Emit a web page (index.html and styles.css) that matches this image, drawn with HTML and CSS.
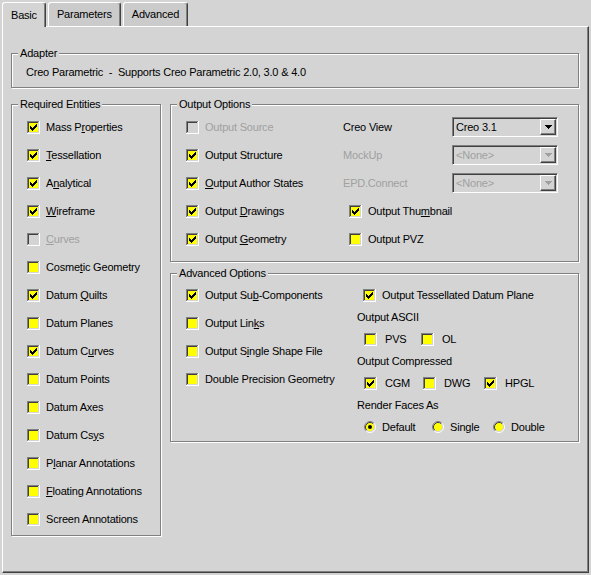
FILE: index.html
```html
<!DOCTYPE html>
<html>
<head>
<meta charset="utf-8">
<link rel="stylesheet" href="styles.css">
</head>
<body>
<svg class="defs" width="0" height="0">
  <defs>
    <symbol id="box" viewBox="0 0 13 13">
      <rect x="0" y="0" width="13" height="13" fill="#fff"/>
      <path d="M0 0h12v1H1v11H0z" fill="#808080"/>
      <path d="M1 1h10v1H2v9H1z" fill="#404040"/>
      <path d="M1 11h11v1H1zM11 1h1v11h-1z" fill="#d4d4d4"/>
    </symbol>
    <symbol id="cbOff" viewBox="0 0 13 13">
      <use href="#box"/>
      <rect x="2" y="2" width="9" height="9" fill="#ffff00"/>
    </symbol>
    <symbol id="cbOn" viewBox="0 0 13 13">
      <use href="#box"/>
      <rect x="2" y="2" width="9" height="9" fill="#ffff00"/>
      <path d="M3 5h1v3H3zM4 6h1v3H4zM5 7h1v3H5zM6 6h1v3H6zM7 5h1v3H7zM8 4h1v3H8zM9 3h1v3H9z" fill="#000"/>
    </symbol>
    <symbol id="cbDis" viewBox="0 0 13 13">
      <use href="#box"/>
      <rect x="2" y="2" width="9" height="9" fill="#d4d4d4"/>
    </symbol>
    <symbol id="rdOff" viewBox="0 0 12 12">
      <circle cx="6" cy="6" r="4.2" fill="#ffff00"/>
      <path d="M2.11 9.89A5.5 5.5 0 0 1 9.89 2.11" fill="none" stroke="#808080"/>
      <path d="M9.89 2.11A5.5 5.5 0 0 1 2.11 9.89" fill="none" stroke="#fff"/>
      <path d="M2.82 9.18A4.5 4.5 0 0 1 9.18 2.82" fill="none" stroke="#404040"/>
      <path d="M9.18 2.82A4.5 4.5 0 0 1 2.82 9.18" fill="none" stroke="#d4d4d4"/>
    </symbol>
    <symbol id="rdOn" viewBox="0 0 12 12">
      <use href="#rdOff"/>
      <circle cx="6" cy="6" r="2" fill="#000"/>
    </symbol>
    <symbol id="arrow" viewBox="0 0 7 4">
      <path d="M0 0h7v1H0zM1 1h5v1H1zM2 2h3v1H2zM3 3h1v1H3z"/>
    </symbol>
  </defs>
</svg>

<div class="tabs">
  <div class="tab active">Basic</div>
  <div class="tab">Parameters</div>
  <div class="tab">Advanced</div>
</div>

<div class="panel">
  <fieldset class="group adapter">
    <legend>Adapter</legend>
    <div class="adapter-text">Creo Parametric  -  Supports Creo Parametric 2.0, 3.0 &amp; 4.0</div>
  </fieldset>

  <div class="columns">
    <fieldset class="group required">
      <legend>Required Entities</legend>
      <div class="list">
        <div class="row28"><svg class="cb" width="13" height="13"><use href="#cbOn"/></svg><span>Mass P<u>r</u>operties</span></div>
        <div class="row28"><svg class="cb" width="13" height="13"><use href="#cbOn"/></svg><span><u>T</u>essellation</span></div>
        <div class="row28"><svg class="cb" width="13" height="13"><use href="#cbOn"/></svg><span>A<u>n</u>alytical</span></div>
        <div class="row28"><svg class="cb" width="13" height="13"><use href="#cbOn"/></svg><span><u>W</u>ireframe</span></div>
        <div class="row28"><svg class="cb" width="13" height="13"><use href="#cbDis"/></svg><span class="dis"><u>C</u>urves</span></div>
        <div class="row28"><svg class="cb" width="13" height="13"><use href="#cbOff"/></svg><span>Cosme<u>t</u>ic Geometry</span></div>
        <div class="row28"><svg class="cb" width="13" height="13"><use href="#cbOn"/></svg><span>Datum <u>Q</u>uilts</span></div>
        <div class="row28"><svg class="cb" width="13" height="13"><use href="#cbOff"/></svg><span>Datum Planes</span></div>
        <div class="row28"><svg class="cb" width="13" height="13"><use href="#cbOn"/></svg><span>Datum C<u>u</u>rves</span></div>
        <div class="row28"><svg class="cb" width="13" height="13"><use href="#cbOff"/></svg><span>Datum Points</span></div>
        <div class="row28"><svg class="cb" width="13" height="13"><use href="#cbOff"/></svg><span>Datum Axes</span></div>
        <div class="row28"><svg class="cb" width="13" height="13"><use href="#cbOff"/></svg><span>Datum Cs<u>y</u>s</span></div>
        <div class="row28"><svg class="cb" width="13" height="13"><use href="#cbOff"/></svg><span>P<u>l</u>anar Annotations</span></div>
        <div class="row28"><svg class="cb" width="13" height="13"><use href="#cbOff"/></svg><span><u>F</u>loating Annotations</span></div>
        <div class="row28"><svg class="cb" width="13" height="13"><use href="#cbOff"/></svg><span>Screen Annotations</span></div>
      </div>
    </fieldset>

    <div class="right-col">
      <fieldset class="group output">
        <legend>Output Options</legend>
        <div class="list out-list">
          <div class="row28">
            <div class="c1"><svg class="cb" width="13" height="13"><use href="#cbDis"/></svg><span class="dis">Output Source</span></div>
            <div class="lbl">Creo View</div>
            <div class="combo"><span class="combo-text">Creo 3.1</span><span class="combo-btn"><svg width="7" height="4"><use href="#arrow"/></svg></span></div>
          </div>
          <div class="row28">
            <div class="c1"><svg class="cb" width="13" height="13"><use href="#cbOn"/></svg><span>Output Structure</span></div>
            <div class="lbl dis">MockUp</div>
            <div class="combo disabled"><span class="combo-text">&lt;None&gt;</span><span class="combo-btn"><svg width="7" height="4"><use href="#arrow"/></svg></span></div>
          </div>
          <div class="row28">
            <div class="c1"><svg class="cb" width="13" height="13"><use href="#cbOn"/></svg><span><u>O</u>utput Author States</span></div>
            <div class="lbl dis">EPD.Connect</div>
            <div class="combo disabled"><span class="combo-text">&lt;None&gt;</span><span class="combo-btn"><svg width="7" height="4"><use href="#arrow"/></svg></span></div>
          </div>
          <div class="row28">
            <div class="c1 wide"><svg class="cb" width="13" height="13"><use href="#cbOn"/></svg><span>Output <u>D</u>rawings</span></div>
            <div class="c1"><svg class="cb" width="13" height="13"><use href="#cbOn"/></svg><span>Output Thu<u>m</u>bnail</span></div>
          </div>
          <div class="row28">
            <div class="c1 wide"><svg class="cb" width="13" height="13"><use href="#cbOn"/></svg><span>Output <u>G</u>eometry</span></div>
            <div class="c1"><svg class="cb" width="13" height="13"><use href="#cbOff"/></svg><span>Output PVZ</span></div>
          </div>
        </div>
      </fieldset>

      <fieldset class="group advanced">
        <legend>Advanced Options</legend>
        <div class="adv">
          <div class="adv-left">
            <div class="row28"><svg class="cb" width="13" height="13"><use href="#cbOn"/></svg><span>Output Su<u>b</u>-Components</span></div>
            <div class="row28"><svg class="cb" width="13" height="13"><use href="#cbOff"/></svg><span>Output Lin<u>k</u>s</span></div>
            <div class="row28"><svg class="cb" width="13" height="13"><use href="#cbOff"/></svg><span>Output S<u>i</u>ngle Shape File</span></div>
            <div class="row28"><svg class="cb" width="13" height="13"><use href="#cbOff"/></svg><span>Double Precision Geometry</span></div>
          </div>
          <div class="adv-right">
            <div class="line ind6"><svg class="cb" width="13" height="13"><use href="#cbOn"/></svg><span>Output Tessellated Datum Plane</span></div>
            <div class="line">Output ASCII</div>
            <div class="line ind7">
              <div class="opt w57"><svg class="cb gap8" width="13" height="13"><use href="#cbOff"/></svg><span>PVS</span></div>
              <div class="opt"><svg class="cb gap8" width="13" height="13"><use href="#cbOff"/></svg><span>OL</span></div>
            </div>
            <div class="line">Output Compressed</div>
            <div class="line ind7">
              <div class="opt w59"><svg class="cb gap8" width="13" height="13"><use href="#cbOn"/></svg><span>CGM</span></div>
              <div class="opt w61"><svg class="cb gap8" width="13" height="13"><use href="#cbOff"/></svg><span>DWG</span></div>
              <div class="opt"><svg class="cb gap8" width="13" height="13"><use href="#cbOn"/></svg><span>HPGL</span></div>
            </div>
            <div class="line">Render Faces As</div>
            <div class="line ind7">
              <div class="opt w68"><svg class="rd" width="12" height="12"><use href="#rdOn"/></svg><span>Default</span></div>
              <div class="opt w61"><svg class="rd" width="12" height="12"><use href="#rdOff"/></svg><span>Single</span></div>
              <div class="opt"><svg class="rd" width="12" height="12"><use href="#rdOff"/></svg><span>Double</span></div>
            </div>
          </div>
        </div>
      </fieldset>
    </div>
  </div>
</div>
</body>
</html>
```

FILE: styles.css
```css
html, body {
  margin: 0;
  padding: 0;
}

body {
  width: 591px;
  height: 575px;
  overflow: hidden;
  background: #d4d4d4;
  color: #000;
  font-family: "Liberation Sans", Arial, sans-serif;
  font-size: 11px;
  line-height: 13px;
  letter-spacing: -0.2px;
}

.defs {
  position: absolute;
  width: 0;
  height: 0;
  overflow: hidden;
}

u {
  text-decoration: underline;
  text-underline-offset: 1px;
}

/* ---------- tabs ---------- */
.tabs {
  display: flex;
  gap: 2px;
  height: 26px;
  box-sizing: border-box;
  padding: 2px 0 0 2px;
}

.tab {
  box-sizing: border-box;
  height: 24px;
  padding: 0 8px;
  display: flex;
  align-items: center;
  background: #cbcbcb;
  border-top: 1px solid #fff;
  border-left: 1px solid #fff;
  border-right: 1px solid #404040;
  box-shadow: inset -1px 0 0 #808080;
  border-radius: 3px 3px 0 0;
}

.tab.active {
  background: #d4d4d4;
  height: 25px;
  position: relative;
  z-index: 1;
}

/* ---------- panel ---------- */
.panel {
  margin-left: 2px;
  width: 587px;
  height: 547px;
  box-sizing: border-box;
  border-top: 1px solid #fff;
  border-left: 1px solid #fff;
  border-right: 1px solid #404040;
  border-bottom: 1px solid #404040;
  box-shadow: inset -1px -1px 0 #808080;
  padding: 20px 0 0 8px;
}

/* ---------- group boxes ---------- */
.group {
  margin: 0;
  padding: 0;
  min-width: 0;
  box-sizing: border-box;
  border: 1px solid #808080;
  box-shadow: inset 1px 1px 0 #fff, 1px 1px 0 #fff;
}

.group legend {
  padding: 0 2px;
  margin-left: 6px;
  line-height: 13px;
  background: #d4d4d4;
}

.adapter {
  width: 568px;
}

.adapter-text {
  padding: 6px 0 8px 14px;
  white-space: pre;
}

.columns {
  display: flex;
  gap: 9px;
  width: 568px;
  margin-top: 10px;
}

.required {
  width: 150px;
  flex: none;
}

.right-col {
  flex: 1;
  display: flex;
  flex-direction: column;
  gap: 5px;
}

.list {
  padding: 2px 0 2px 15px;
}

.out-list {
  padding-bottom: 8px;
}

.row28 {
  height: 28px;
  display: flex;
  align-items: center;
  white-space: nowrap;
}

.cb {
  display: block;
  flex: none;
  margin-right: 6px;
  shape-rendering: crispEdges;
}

.cb.gap8 {
  margin-right: 8px;
}

.rd {
  display: block;
  flex: none;
  margin-right: 6px;
}

.dis {
  color: #a0a0a0;
}

.c1 {
  width: 157px;
  display: flex;
  align-items: center;
}

.c1.wide {
  width: 163px;
}

.lbl {
  width: 109px;
}

/* ---------- combo ---------- */
.combo {
  width: 106px;
  height: 20px;
  box-sizing: border-box;
  border: 1px solid;
  border-color: #808080 #fff #fff #808080;
  padding: 1px;
  box-shadow: inset 1px 1px 0 #404040;
  display: flex;
  background: #d4d4d4;
}

.combo-text {
  flex: 1;
  padding-left: 2px;
  line-height: 16px;
}

.combo-btn {
  width: 16px;
  height: 16px;
  box-sizing: border-box;
  border: 1px solid;
  border-color: #fff #404040 #404040 #fff;
  box-shadow: inset -1px -1px 0 #808080;
  display: flex;
  align-items: center;
  justify-content: center;
  background: #d4d4d4;
}

.combo-btn svg {
  display: block;
  fill: #000;
  shape-rendering: crispEdges;
}

.combo.disabled .combo-text {
  color: #a0a0a0;
}

.combo.disabled .combo-btn svg {
  fill: #a0a0a0;
}

/* ---------- advanced ---------- */
.adv {
  display: flex;
  padding: 1px 0 3px 15px;
}

.adv-left {
  width: 171px;
  flex: none;
}

.adv-right {
  margin-top: 3px;
  flex: 1;
}

.line {
  height: 22px;
  display: flex;
  align-items: center;
  white-space: nowrap;
}

.ind6 {
  padding-left: 6px;
}

.ind7 {
  padding-left: 7px;
}

.opt {
  display: flex;
  align-items: center;
}

.w57 { width: 57px; }
.w59 { width: 59px; }
.w61 { width: 61px; }
.w68 { width: 68px; }
```
